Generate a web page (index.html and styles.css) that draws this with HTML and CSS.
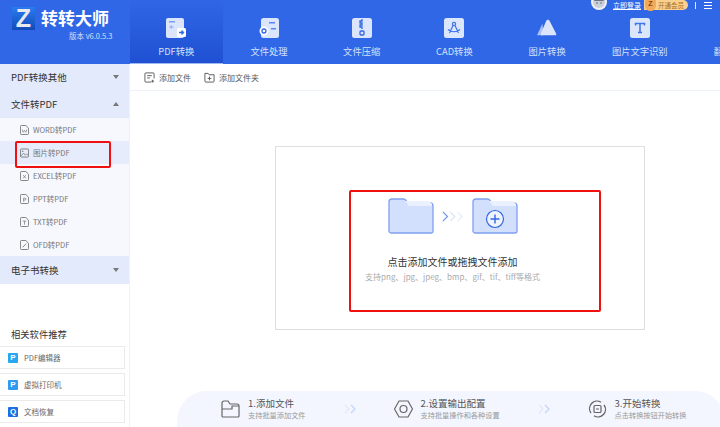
FILE: index.html
```html
<!DOCTYPE html>
<html lang="zh-CN">
<head>
  <meta charset="UTF-8" />
  <title>转转大师</title>
  <link rel="stylesheet" href="styles.css">
</head>
<body>
  <header class="topbar">
    <div class="brand">
      <div class="brand-row">
        <span class="logo">Z</span>
        <span class="brand-name">转转大师</span>
      </div>
      <div class="brand-ver">版本 v6.0.5.3</div>
    </div>
    <nav class="tabs">
      <a class="tab active">
        <svg class="tab-icon" viewBox="0 0 20 20"><rect x="0" y="0" width="18" height="20" rx="2" fill="#dbe6fd"/><rect x="3" y="3" width="6" height="1.5" fill="#7c9df0"/><path d="M8 9H4M6 7.5 4 9l2 1.5" fill="none" stroke="#9db6f4" stroke-width="1.2"/><rect x="11" y="10" width="9" height="9" rx="1.5" fill="#fff"/><path d="M13 14.5h4M15.500 12.500l2 2-2 2" fill="none" stroke="#3067e6" stroke-width="1.300"/></svg>
        PDF转换
      </a>
      <a class="tab">
        <svg class="tab-icon" viewBox="0 0 20 20"><rect x="2" y="0" width="18" height="20" rx="2.500" fill="#dbe6fd"/><rect x="10" y="4" width="6" height="1.500" fill="#5b85ec"/><rect x="12" y="10" width="5" height="1.500" fill="#5b85ec"/><circle cx="5" cy="13" r="4.500" fill="#fff"/><circle cx="5" cy="13" r="2" fill="none" stroke="#3067e6" stroke-width="1.300"/></svg>
        文件处理
      </a>
      <a class="tab">
        <svg class="tab-icon" viewBox="0 0 20 20"><rect x="0" y="0" width="20" height="20" rx="2.500" fill="#dbe6fd"/><path d="M10 1v2h-2v2h2v2h-2v2h2v2" fill="none" stroke="#3067e6" stroke-width="1.300"/><rect x="8" y="13" width="4" height="4" rx="1" fill="none" stroke="#3067e6" stroke-width="1.300"/></svg>
        文件压缩
      </a>
      <a class="tab">
        <svg class="tab-icon" viewBox="0 0 20 20"><rect x="0" y="0" width="20" height="20" rx="2.500" fill="#dbe6fd"/><circle cx="10" cy="6" r="1.600" fill="none" stroke="#3f73e8" stroke-width="1.200"/><path d="M9 7.500 5.500 15M11 7.500 14.500 15M4 11.500c3 3 9 3 12 0" fill="none" stroke="#3f73e8" stroke-width="1.200"/></svg>
        CAD转换
      </a>
      <a class="tab">
        <svg class="tab-icon" viewBox="0 0 22 20"><path d="M6 5 0 18h7z" fill="#a9c0f7"/><path d="M12 1c1 0 1.500.6 2 1.500L21 16c.6 1.300 0 2-1.200 2H5.500c-1.300 0-2-.8-1.300-2L10 2.500C10.500 1.600 11 1 12 1z" fill="#dbe6fd"/></svg>
        图片转换
      </a>
      <a class="tab">
        <svg class="tab-icon" viewBox="0 0 20 20"><rect x="0" y="0" width="20" height="20" rx="2.500" fill="#dbe6fd"/><path d="M5.500 7.500v-2h9v2M10 5.500v9M8 14.500h4" fill="none" stroke="#3f73e8" stroke-width="1.500"/></svg>
        图片文字识别
      </a>
      <a class="tab">
        <svg class="tab-icon" viewBox="0 0 20 20"><rect x="0" y="0" width="20" height="20" rx="2.500" fill="#dbe6fd"/></svg>
        翻译工具
      </a>
    </nav>
    <div class="account">
      <svg class="avatar" viewBox="0 0 16 16"><circle cx="8" cy="8" r="8" fill="#eef1f6"/><circle cx="8" cy="8" r="6" fill="#c9d0dc"/><path d="M3 7c1.500-3.500 8.500-3.500 10 0z" fill="#6f7681"/><circle cx="6" cy="9" r=".7" fill="#555"/><circle cx="10" cy="9" r=".7" fill="#555"/></svg>
      <span class="login">立即登录</span>
      <span class="vip"><span class="vip-mark">Z</span>开通会员</span>
      <span class="sep"></span>
      <span class="menu"><i></i><i></i><i></i></span>
    </div>
  </header>

  <div class="body">
    <aside class="sidebar">
      <div class="group">PDF转换其他<span class="arrow down"></span></div>
      <div class="group tall">文件转PDF<span class="arrow up"></span></div>
      <ul class="sub">
        <li>
          <svg class="doc" viewBox="0 0 10 11"><path d="M.5 1.500a1 1 0 0 1 1-1h5l3 3v6a1 1 0 0 1-1 1h-7a1 1 0 0 1-1-1z" fill="none" stroke="#777"/><path d="M2.500 5 3.500 8 5 6 6.500 8 7.500 5" fill="none" stroke="#777" stroke-width=".8"/></svg>
          WORD转PDF
        </li>
        <li class="selected">
          <svg class="doc" viewBox="0 0 10 11"><rect x=".5" y="1" width="9" height="9" rx="1" fill="none" stroke="#777"/><path d="M1 9 4 5.500 6 8 7.500 6.500 9 8" fill="none" stroke="#777" stroke-width=".8"/><circle cx="3" cy="3.500" r=".8" fill="#777"/></svg>
          图片转PDF
        </li>
        <li>
          <svg class="doc" viewBox="0 0 10 11"><path d="M.5 1.500a1 1 0 0 1 1-1h5l3 3v6a1 1 0 0 1-1 1h-7a1 1 0 0 1-1-1z" fill="none" stroke="#777"/><path d="M3.500 4.500 6.500 8M6.500 4.500 3.500 8" fill="none" stroke="#777" stroke-width=".8"/></svg>
          EXCEL转PDF
        </li>
        <li>
          <svg class="doc" viewBox="0 0 10 11"><path d="M.5 1.500a1 1 0 0 1 1-1h5l3 3v6a1 1 0 0 1-1 1h-7a1 1 0 0 1-1-1z" fill="none" stroke="#777"/><path d="M4 8.500V4.500h1.500a1 1 0 0 1 0 2.200H4" fill="none" stroke="#777" stroke-width=".8"/></svg>
          PPT转PDF
        </li>
        <li>
          <svg class="doc" viewBox="0 0 10 11"><path d="M.5 1.500a1 1 0 0 1 1-1h5l3 3v6a1 1 0 0 1-1 1h-7a1 1 0 0 1-1-1z" fill="none" stroke="#777"/><path d="M3 4.500h4M5 4.500v4" fill="none" stroke="#777" stroke-width=".8"/></svg>
          TXT转PDF
        </li>
        <li>
          <svg class="doc" viewBox="0 0 10 11"><path d="M.5 1.500a1 1 0 0 1 1-1h5l3 3v6a1 1 0 0 1-1 1h-7a1 1 0 0 1-1-1z" fill="none" stroke="#777"/><path d="M3 8 7 4" fill="none" stroke="#777"/></svg>
          OFD转PDF
        </li>
      </ul>
      <div class="group tall">电子书转换<span class="arrow down"></span></div>

      <div class="rec-title">相关软件推荐</div>
      <a class="rec">
        <span class="rec-icon light">P</span>PDF编辑器
      </a>
      <a class="rec">
        <span class="rec-icon">P</span>虚拟打印机
      </a>
      <a class="rec">
        <span class="rec-icon dark">Q</span>文档恢复
      </a>
    </aside>

    <main class="main">
      <div class="toolbar">
        <a class="tool">
          <svg class="tool-icon" viewBox="0 0 12 12"><path d="M8 11H2a1 1 0 0 1-1-1V2a1 1 0 0 1 1-1h8a1 1 0 0 1 1 1v5" fill="none" stroke="#555"/><path d="M3.500 4h5M3.500 6.500h3M9.500 8.500v3M8 10h3" fill="none" stroke="#555"/></svg>
          添加文件
        </a>
        <a class="tool">
          <svg class="tool-icon" viewBox="0 0 12 12"><path d="M1 10V1.500h3.500l1 1.500H11v7a1 1 0 0 1-1 1H2a1 1 0 0 1-1-1z" fill="none" stroke="#555"/><path d="M6 5v4M4 7h4" fill="none" stroke="#555"/></svg>
          添加文件夹
        </a>
      </div>

      <section class="dropbox">
        <div class="flow">
          <svg class="folder" viewBox="0 0 46 36"><path d="M1 4a3 3 0 0 1 3-3h11.500a3 3 0 0 1 2.500 1.300L20 5h22a3 3 0 0 1 3 3v25a2 2 0 0 1-2 2H3a2 2 0 0 1-2-2z" fill="#d3e0fd" stroke="#7fa0ee" stroke-width="1.300"/><path d="M17 3h24l3 3v2H21z" fill="#eaf0fe"/></svg>
          <svg class="chevrons" viewBox="0 0 24 12"><path d="M1 1l5 5-5 5" fill="none" stroke="#6f95ec" stroke-width="1.300"/><path d="M9 1l5 5-5 5" fill="none" stroke="#d5e1fb" stroke-width="1.200"/><path d="M17 1l5 5-5 5" fill="none" stroke="#e4ecfc" stroke-width="1.200"/></svg>
          <svg class="folder" viewBox="0 0 46 36"><path d="M1 4a3 3 0 0 1 3-3h11.500a3 3 0 0 1 2.500 1.300L20 5h22a3 3 0 0 1 3 3v25a2 2 0 0 1-2 2H3a2 2 0 0 1-2-2z" fill="#d3e0fd" stroke="#7fa0ee" stroke-width="1.300"/><path d="M17 3h24l3 3v2H21z" fill="#eaf0fe"/><circle cx="23" cy="21" r="8.500" fill="#eef3fe" stroke="#3067e6" stroke-width="1.200"/><path d="M23 16.500v9M18.500 21h9" fill="none" stroke="#3067e6" stroke-width="1.400"/></svg>
        </div>
        <p class="drop-title">点击添加文件或拖拽文件添加</p>
        <p class="drop-note">支持png、jpg、jpeg、bmp、gif、tif、tiff等格式</p>
        <div class="mark-box"></div>
      </section>

      <footer class="steps">
        <div class="step">
          <svg class="step-icon" viewBox="0 0 19 18"><path d="M1 16V3a2 2 0 0 1 2-2h4l2 3h7a2 2 0 0 1 2 2v10a1 1 0 0 1-1 1H2a1 1 0 0 1-1-1z" fill="none" stroke="#666" stroke-width="1.200"/><path d="M1 9h10V6h7" fill="none" stroke="#666" stroke-width="1.200"/></svg>
          <div><b>1.添加文件</b><small>支持批量添加文件</small></div>
        </div>
        <svg class="step-arrows" viewBox="0 0 12 10"><path d="M1 1l4 4-4 4" fill="none" stroke="#e0e9fc" stroke-width="1.200"/><path d="M7 1l4 4-4 4" fill="none" stroke="#c3d4fa" stroke-width="1.200"/></svg>
        <div class="step">
          <svg class="step-icon" viewBox="0 0 19 18"><path d="M5 1h9l4.500 8L14 17H5L.5 9z" fill="none" stroke="#666" stroke-width="1.200"/><circle cx="9.500" cy="9" r="3.500" fill="none" stroke="#666" stroke-width="1.200"/></svg>
          <div><b>2.设置输出配置</b><small>支持批量操作和各种设置</small></div>
        </div>
        <svg class="step-arrows" viewBox="0 0 12 10"><path d="M1 1l4 4-4 4" fill="none" stroke="#e0e9fc" stroke-width="1.200"/><path d="M7 1l4 4-4 4" fill="none" stroke="#c3d4fa" stroke-width="1.200"/></svg>
        <div class="step">
          <svg class="step-icon" viewBox="0 0 19 18"><path d="M3 13A7.500 7.500 0 0 1 13 2.200M16 5a7.500 7.500 0 0 1-10 10.800" fill="none" stroke="#666" stroke-width="1.300"/><rect x="6" y="5.500" width="7" height="7" rx="1" fill="none" stroke="#666" stroke-width="1.200"/><path d="M8 9h3" stroke="#666"/></svg>
          <div><b>3.开始转换</b><small>点击转换按钮开始转换</small></div>
        </div>
      </footer>
    </main>
  </div>
</body>
</html>
```
FILE: styles.css
```css
html,body{height:100%;margin:0;overflow:hidden;background:#fff;color:#333;font-family:"Noto Sans CJK SC","Liberation Sans",sans-serif}
a{color:inherit;text-decoration:none}
ul{list-style:none;margin:0;padding:0}
p{margin:0}

/* top bar */
.topbar{position:relative;display:flex;height:64px;background:#3067e6;color:#fff}
.brand{flex:none;width:130px;padding:7px 0 0 12px;box-sizing:border-box}
.brand-row{display:flex;align-items:center;gap:6px}
.logo{flex:none;width:23px;height:23px;background:linear-gradient(#2a7cf0,#124bb8);color:#e8eaf0;font:bold 25px/23px "Liberation Sans",sans-serif;text-align:center}
.brand-name{font-size:17px;font-weight:700;line-height:20px;margin-top:-2px}
.brand-ver{font-size:7.500px;line-height:12px;margin:0 0 0 57px;color:#d5e0fa}

.tabs{display:flex;flex:1;overflow:hidden}
.tab{flex:none;width:92.7px;height:64px;box-sizing:border-box;padding-top:18px;display:flex;flex-direction:column;align-items:center;gap:5px;font-size:9.300px;line-height:16px;color:#d5e0fa;white-space:nowrap}
.tab.active{background:linear-gradient(#3067e6,#1f50d2);border-bottom:1px solid #9db8f5}
.tab-icon{width:20px;height:20px;flex:none}

.account{position:absolute;top:0;right:8px;display:flex;align-items:center;height:10px;font-size:7px}
.avatar{width:16px;height:16px;margin:-6px 6px 0 0;flex:none}
.login{text-decoration:underline;margin-right:3px}
.vip{display:flex;align-items:center;gap:2px;height:10px;padding:0 4px 0 1px;border-radius:0 5px 5px 0;background:#fbcf8e;color:#a5702c;font-size:6.500px;white-space:nowrap}
.vip-mark{width:11px;height:12px;background:#f3a95a;color:#7d4b15;font:bold 7px/10px "Liberation Sans",sans-serif;text-align:center;border-radius:3px 3px 6px 6px}
.sep{width:1px;height:7px;background:#dfe7fb;margin:0 8px 0 7px}
.menu{display:flex;flex-direction:column;gap:2px}
.menu i{display:block;width:8px;height:1px;background:#fff}

/* page body */
.body{display:flex;height:363px}

/* left column */
.sidebar{flex:none;width:130px;box-sizing:border-box;border-right:1px solid #edf1fb}
.group{display:flex;align-items:center;justify-content:space-between;height:26px;padding:0 10px 0 11px;background:#e3eafb;font-size:9.500px;color:#333}
.group.tall{height:28px}
.arrow{width:0;height:0;border-left:3.500px solid transparent;border-right:3.500px solid transparent}
.arrow.down{border-top:4px solid #777}
.arrow.up{border-bottom:4px solid #777}
.sub{background:#f6f8fe}
.sub li{position:relative;display:flex;align-items:center;gap:4px;height:23px;padding-left:20px;font-size:7.500px;color:#777}
.sub li.selected{background:#e6ecfb}
/* red mark drawn on top of the row */
.sub li.selected::after{content:"";position:absolute;left:15px;top:0;width:96px;height:27px;box-sizing:border-box;border:2px solid #f01010;border-radius:2px}
.doc{width:9px;height:10px;flex:none}

.rec-title{margin:43px 0 5px 11px;font-size:9.300px;line-height:14px;color:#333}
.rec{display:flex;align-items:center;gap:6px;height:23px;box-sizing:border-box;margin:0 4px 4px 0;padding-left:8px;border:1px solid #eaeaea;border-left:0;font-size:7.500px;color:#666}
.rec-icon{flex:none;width:10px;height:10px;background:#2f9bf0;color:#fff;font:bold 8px/10px "Liberation Sans",sans-serif;text-align:center;border-radius:1px}
.rec-icon.light{background:#27a6f2}
.rec-icon.dark{background:#1b6fe0}

/* right column */
.main{flex:1;display:flex;flex-direction:column;min-width:0}
.toolbar{flex:none;display:flex;gap:13px;height:27px;align-items:center;padding-left:14px;box-sizing:border-box;border-bottom:1px solid #eef2fc;font-size:8px;color:#555}
.tool{display:flex;align-items:center;gap:4px}
.tool-icon{width:11px;height:11px;flex:none}

.dropbox{position:relative;flex:none;width:370px;height:184px;box-sizing:border-box;margin:55px 0 0 145px;padding:51px 15px 0 0;border:1px solid #dedede;display:flex;flex-direction:column;align-items:center}
.flow{display:flex;align-items:center;gap:8px}
.folder{width:46px;height:36px;flex:none}
.chevrons{width:22px;height:11px;flex:none}
.drop-title{margin-top:21px;font-size:10px;line-height:14px;color:#333}
.drop-note{margin-top:1px;font-size:8px;line-height:14px;color:#aaa}
/* red mark over the drop area */
.mark-box{position:absolute;left:73px;top:43px;width:252px;height:122px;box-sizing:border-box;border:2px solid #f01010;border-radius:2px}

.steps{flex:none;display:flex;align-items:center;gap:38px;height:36px;margin:61px -5px 0 47px;padding-left:44px;background:#f3f6fe;border-radius:30px 30px 0 0}
.step{display:flex;align-items:center;gap:8px;flex:none}
.step-icon{width:19px;height:18px;flex:none}
.step b{display:block;font-weight:400;font-size:9.500px;line-height:13px;color:#555}
.step small{display:block;font-size:7.200px;line-height:11px;color:#999}
.step-arrows{width:12px;height:10px;flex:none}
```
